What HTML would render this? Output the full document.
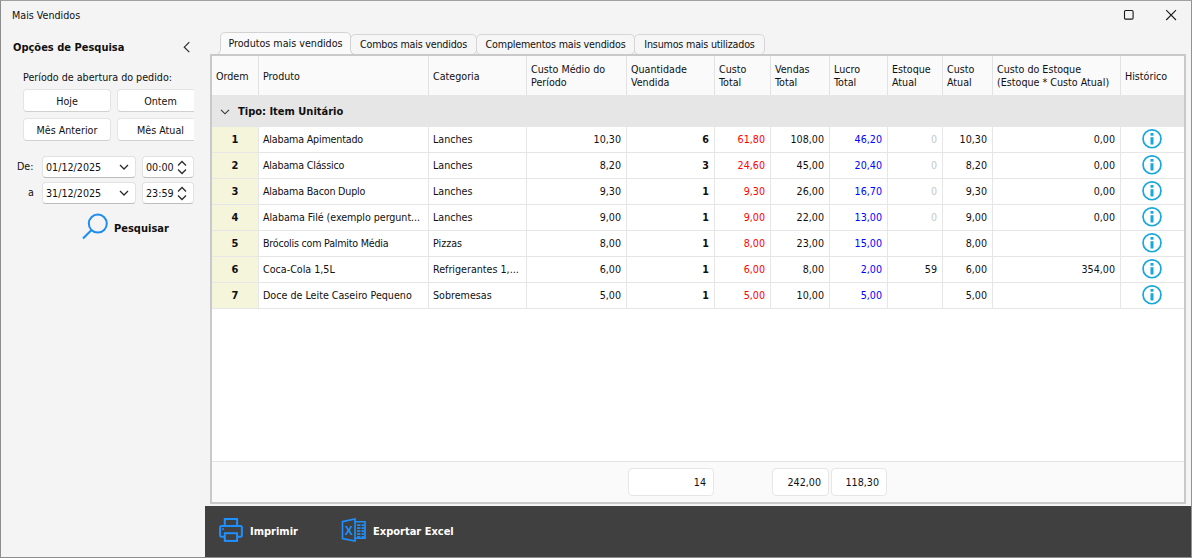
<!DOCTYPE html>
<html lang="pt-BR">
<head>
<meta charset="utf-8">
<title>Mais Vendidos</title>
<style>
*{box-sizing:border-box;margin:0;padding:0}
html,body{width:1192px;height:558px;overflow:hidden}
body{background:#f4f4f4;font-family:"DejaVu Sans Condensed","Liberation Sans",sans-serif;font-size:10.65px;color:#101010;position:relative}
.abs{position:absolute}
.t{position:absolute;white-space:nowrap;line-height:14px;height:14px}
.b{font-weight:bold}
#win{position:absolute;left:0;top:0;width:1192px;height:558px;border-left:1px solid #8c8c8c;border-top:1px solid #a0a0a0;border-right:1px solid #929292;border-bottom:1px solid #8c8c8c;pointer-events:none;z-index:50}
/* left panel */
.btn{position:absolute;height:23px;width:88px;padding-top:1px;background:#fff;border:1px solid #e4e4e4;border-bottom-color:#d0d0d0;border-radius:4px;text-align:center;line-height:21px;white-space:nowrap}
.inp{position:absolute;height:22px;padding-top:1px;background:#fff;border:1px solid #e2e2e2;border-bottom-color:#bdbdbd;border-radius:4px;line-height:19px;white-space:nowrap;padding-left:3px}
#leftclip{position:absolute;left:0;top:30px;width:194px;height:470px;overflow:hidden}
/* tabs */
.tab{position:absolute;top:34px;height:21px;background:#f6f6f6;border:1px solid #d6d6d6;border-radius:5px;text-align:center;line-height:19px;white-space:nowrap;z-index:1}
#acttab{position:absolute;left:217px;top:32px;width:137px;height:23px;z-index:2}
#acttab .t{left:0;width:137px;text-align:center;top:5px}
/* grid */
#grid{z-index:3;position:absolute;left:210px;top:54px;width:976px;height:450px;border:2px solid #c9c9c9;background:#fff;overflow:hidden}
#hdr{position:absolute;left:0;top:0;width:972px;height:39px;background:#fafafa}
.hc{position:absolute;top:0;height:39px;border-right:1px solid #e2e2e2;padding-left:4px;padding-top:2px;line-height:13px;display:flex;align-items:center;white-space:nowrap}
#grp{position:absolute;left:0;top:39px;width:972px;height:32px;background:#e6e6e6}
.row{position:absolute;left:0;width:972px;height:26px;border-bottom:1px solid #e6e6e6}
.c{position:absolute;top:0;height:25px;line-height:25px;border-right:1px solid #e6e6e6;white-space:nowrap;overflow:hidden}
.r{text-align:right;padding-right:5px}
.l{padding-left:4px}
.ord{background:#f5f5dc;text-align:center;font-weight:bold;font-size:11px}
.red{color:#f00}.blue{color:#00f}.gray{color:#c8c8c8}
#foot{position:absolute;left:0;top:405px;width:972px;height:41px;background:#fafafa;border-top:1px solid #e4e4e4}
.sum{position:absolute;top:6px;height:28px;background:#fff;border:1px solid #e6e6e6;border-radius:4px;text-align:right;padding-right:7px;line-height:27px}
#bar{position:absolute;left:205px;top:506px;width:986px;height:51px;background:#404040}
#bar .t{color:#fff;font-weight:bold;font-size:11px}
</style>
</head>
<body>
<div id="win"></div>
<div class="t" style="left:12px;top:9px">Mais Vendidos</div>
<svg class="abs" style="left:1122px;top:8px" width="14" height="14" viewBox="0 0 14 14"><rect x="2.5" y="2.5" width="8.6" height="8.6" rx="1.2" fill="none" stroke="#1a1a1a" stroke-width="1.1"/></svg>
<svg class="abs" style="left:1164px;top:8px" width="14" height="14" viewBox="0 0 14 14"><path d="M2.2 2.2 L12 12 M12 2.2 L2.2 12" fill="none" stroke="#1a1a1a" stroke-width="1.1"/></svg>

<div id="leftclip">
 <div class="t b" style="left:13px;top:11px;font-size:11px">Opções de Pesquisa</div>
 <svg class="abs" style="left:181px;top:10px" width="12" height="14" viewBox="0 0 12 14"><path d="M8.3 2.2 L3.3 7.2 L8.3 12.2" fill="none" stroke="#2a2a2a" stroke-width="1.2"/></svg>
 <div class="t" style="left:23px;top:41px">Período de abertura do pedido:</div>
 <div class="btn" style="left:23px;top:59px">Hoje</div>
 <div class="btn" style="left:117px;top:59px;width:87px">Ontem</div>
 <div class="btn" style="left:23px;top:88px">Mês Anterior</div>
 <div class="btn" style="left:117px;top:88px;width:87px">Mês Atual</div>
 <div class="t" style="left:17px;top:130px">De:</div>
 <div class="inp" style="left:42px;top:126px;width:94px">01/12/2025</div>
 <div class="inp" style="left:142px;top:126px;width:52px">00:00</div>
 <div class="t" style="left:28px;top:156px">a</div>
 <div class="inp" style="left:42px;top:152px;width:94px">31/12/2025</div>
 <div class="inp" style="left:142px;top:152px;width:52px">23:59</div>
 <svg class="abs" style="left:118px;top:132px" width="12" height="10" viewBox="0 0 12 10"><path d="M2 3 L6 7 L10 3" fill="none" stroke="#2a2a2a" stroke-width="1.25"/></svg>
 <svg class="abs" style="left:118px;top:158px" width="12" height="10" viewBox="0 0 12 10"><path d="M2 3 L6 7 L10 3" fill="none" stroke="#2a2a2a" stroke-width="1.25"/></svg>
 <svg class="abs" style="left:177px;top:130px" width="10" height="15" viewBox="0 0 10 15"><path d="M1 5.5 L5 1.5 L9 5.5 M1 9.5 L5 13.5 L9 9.5" fill="none" stroke="#2a2a2a" stroke-width="1.25"/></svg>
 <svg class="abs" style="left:177px;top:156px" width="10" height="15" viewBox="0 0 10 15"><path d="M1 5.5 L5 1.5 L9 5.5 M1 9.5 L5 13.5 L9 9.5" fill="none" stroke="#2a2a2a" stroke-width="1.25"/></svg>
 <svg class="abs" style="left:81px;top:183px" width="28" height="28" viewBox="0 0 28 28"><circle cx="16.8" cy="10.6" r="9" fill="none" stroke="#1e8cf0" stroke-width="2"/><path d="M10.3 17.2 L2 25.5" stroke="#1e8cf0" stroke-width="2.1" fill="none"/></svg>
 <div class="t b" style="left:114px;top:192px;font-size:11px">Pesquisar</div>
</div>

<div id="acttab"><svg class="abs" style="left:0;top:0" width="137" height="23" viewBox="0 0 137 23"><path d="M0 22.5 Q2.6 22 3.5 18.5 L3.5 5.5 Q3.5 0.5 8.5 0.5 L128.5 0.5 Q133.5 0.5 133.5 5.5 L133.5 18.5 Q134.4 22 137 22.5 Z" fill="#fafafa" stroke="#d2d2d2" stroke-width="1"/></svg><div class="t">Produtos mais vendidos</div></div>
<div class="tab" style="left:350px;width:127px;letter-spacing:-0.2px">Combos mais vendidos</div>
<div class="tab" style="left:476px;width:159px;letter-spacing:-0.18px">Complementos mais vendidos</div>
<div class="tab" style="left:634px;width:131px;letter-spacing:-0.19px">Insumos mais utilizados</div>

<div id="grid">
 <div id="hdr">
<div class="hc" style="left:0px;width:47px"><span>Ordem</span></div>
<div class="hc" style="left:47px;width:170px"><span>Produto</span></div>
<div class="hc" style="left:217px;width:98px"><span>Categoria</span></div>
<div class="hc" style="left:315px;width:100px;padding-top:0"><span>Custo Médio do<br>Período</span></div>
<div class="hc" style="left:415px;width:88px;padding-top:0"><span>Quantidade<br>Vendida</span></div>
<div class="hc" style="left:503px;width:56px;padding-top:0"><span>Custo<br>Total</span></div>
<div class="hc" style="left:559px;width:59px;padding-top:0"><span>Vendas<br>Total</span></div>
<div class="hc" style="left:618px;width:58px;padding-top:0"><span>Lucro<br>Total</span></div>
<div class="hc" style="left:676px;width:55px;padding-top:0"><span>Estoque<br>Atual</span></div>
<div class="hc" style="left:731px;width:50px;padding-top:0"><span>Custo<br>Atual</span></div>
<div class="hc" style="left:781px;width:128px;padding-top:0"><span>Custo do Estoque<br>(Estoque * Custo Atual)</span></div>
<div class="hc" style="left:909px;width:63px;border-right:none"><span>Histórico</span></div>
</div>
 <div id="grp"><svg class="abs" style="left:8px;top:13px" width="10" height="8" viewBox="0 0 10 8"><path d="M1 1.8 L5 5.8 L9 1.8" fill="none" stroke="#333" stroke-width="1.1"/></svg><div class="t b" style="left:26px;top:10px;font-size:11px">Tipo: Item Unitário</div></div>
 <div id="rows">
<div class="row" style="top:71px"><div class="c ord" style="left:0px;width:47px">1</div><div class="c l" style="left:47px;width:170px;letter-spacing:-0.19px">Alabama Apimentado</div><div class="c l" style="left:217px;width:98px">Lanches</div><div class="c r" style="left:315px;width:100px">10,30</div><div class="c r b" style="left:415px;width:88px">6</div><div class="c r red" style="left:503px;width:56px">61,80</div><div class="c r" style="left:559px;width:59px">108,00</div><div class="c r blue" style="left:618px;width:58px">46,20</div><div class="c r gray" style="left:676px;width:55px">0</div><div class="c r" style="left:731px;width:50px">10,30</div><div class="c r" style="left:781px;width:128px">0,00</div><div class="c" style="left:909px;width:63px;border-right:none"><svg class="abs" style="left:20px;top:1px" width="23" height="23" viewBox="0 0 23 23"><circle cx="11" cy="10.8" r="8.95" fill="none" stroke="#1aa7dc" stroke-width="1.7"/><rect x="9.5" y="9.2" width="3" height="7.3" fill="#1aa7dc"/><rect x="9.5" y="5" width="3" height="2.7" fill="#1aa7dc"/></svg></div></div>
<div class="row" style="top:97px"><div class="c ord" style="left:0px;width:47px">2</div><div class="c l" style="left:47px;width:170px;letter-spacing:-0.19px">Alabama Clássico</div><div class="c l" style="left:217px;width:98px">Lanches</div><div class="c r" style="left:315px;width:100px">8,20</div><div class="c r b" style="left:415px;width:88px">3</div><div class="c r red" style="left:503px;width:56px">24,60</div><div class="c r" style="left:559px;width:59px">45,00</div><div class="c r blue" style="left:618px;width:58px">20,40</div><div class="c r gray" style="left:676px;width:55px">0</div><div class="c r" style="left:731px;width:50px">8,20</div><div class="c r" style="left:781px;width:128px">0,00</div><div class="c" style="left:909px;width:63px;border-right:none"><svg class="abs" style="left:20px;top:1px" width="23" height="23" viewBox="0 0 23 23"><circle cx="11" cy="10.8" r="8.95" fill="none" stroke="#1aa7dc" stroke-width="1.7"/><rect x="9.5" y="9.2" width="3" height="7.3" fill="#1aa7dc"/><rect x="9.5" y="5" width="3" height="2.7" fill="#1aa7dc"/></svg></div></div>
<div class="row" style="top:123px"><div class="c ord" style="left:0px;width:47px">3</div><div class="c l" style="left:47px;width:170px;letter-spacing:-0.2px">Alabama Bacon Duplo</div><div class="c l" style="left:217px;width:98px">Lanches</div><div class="c r" style="left:315px;width:100px">9,30</div><div class="c r b" style="left:415px;width:88px">1</div><div class="c r red" style="left:503px;width:56px">9,30</div><div class="c r" style="left:559px;width:59px">26,00</div><div class="c r blue" style="left:618px;width:58px">16,70</div><div class="c r gray" style="left:676px;width:55px">0</div><div class="c r" style="left:731px;width:50px">9,30</div><div class="c r" style="left:781px;width:128px">0,00</div><div class="c" style="left:909px;width:63px;border-right:none"><svg class="abs" style="left:20px;top:1px" width="23" height="23" viewBox="0 0 23 23"><circle cx="11" cy="10.8" r="8.95" fill="none" stroke="#1aa7dc" stroke-width="1.7"/><rect x="9.5" y="9.2" width="3" height="7.3" fill="#1aa7dc"/><rect x="9.5" y="5" width="3" height="2.7" fill="#1aa7dc"/></svg></div></div>
<div class="row" style="top:149px"><div class="c ord" style="left:0px;width:47px">4</div><div class="c l" style="left:47px;width:170px;letter-spacing:-0.05px">Alabama Filé (exemplo pergunt...</div><div class="c l" style="left:217px;width:98px">Lanches</div><div class="c r" style="left:315px;width:100px">9,00</div><div class="c r b" style="left:415px;width:88px">1</div><div class="c r red" style="left:503px;width:56px">9,00</div><div class="c r" style="left:559px;width:59px">22,00</div><div class="c r blue" style="left:618px;width:58px">13,00</div><div class="c r gray" style="left:676px;width:55px">0</div><div class="c r" style="left:731px;width:50px">9,00</div><div class="c r" style="left:781px;width:128px">0,00</div><div class="c" style="left:909px;width:63px;border-right:none"><svg class="abs" style="left:20px;top:1px" width="23" height="23" viewBox="0 0 23 23"><circle cx="11" cy="10.8" r="8.95" fill="none" stroke="#1aa7dc" stroke-width="1.7"/><rect x="9.5" y="9.2" width="3" height="7.3" fill="#1aa7dc"/><rect x="9.5" y="5" width="3" height="2.7" fill="#1aa7dc"/></svg></div></div>
<div class="row" style="top:175px"><div class="c ord" style="left:0px;width:47px">5</div><div class="c l" style="left:47px;width:170px;letter-spacing:-0.23px">Brócolis com Palmito Média</div><div class="c l" style="left:217px;width:98px">Pizzas</div><div class="c r" style="left:315px;width:100px">8,00</div><div class="c r b" style="left:415px;width:88px">1</div><div class="c r red" style="left:503px;width:56px">8,00</div><div class="c r" style="left:559px;width:59px">23,00</div><div class="c r blue" style="left:618px;width:58px">15,00</div><div class="c r" style="left:676px;width:55px"></div><div class="c r" style="left:731px;width:50px">8,00</div><div class="c r" style="left:781px;width:128px"></div><div class="c" style="left:909px;width:63px;border-right:none"><svg class="abs" style="left:20px;top:1px" width="23" height="23" viewBox="0 0 23 23"><circle cx="11" cy="10.8" r="8.95" fill="none" stroke="#1aa7dc" stroke-width="1.7"/><rect x="9.5" y="9.2" width="3" height="7.3" fill="#1aa7dc"/><rect x="9.5" y="5" width="3" height="2.7" fill="#1aa7dc"/></svg></div></div>
<div class="row" style="top:201px"><div class="c ord" style="left:0px;width:47px">6</div><div class="c l" style="left:47px;width:170px">Coca-Cola 1,5L</div><div class="c l" style="left:217px;width:98px">Refrigerantes 1,...</div><div class="c r" style="left:315px;width:100px">6,00</div><div class="c r b" style="left:415px;width:88px">1</div><div class="c r red" style="left:503px;width:56px">6,00</div><div class="c r" style="left:559px;width:59px">8,00</div><div class="c r blue" style="left:618px;width:58px">2,00</div><div class="c r" style="left:676px;width:55px">59</div><div class="c r" style="left:731px;width:50px">6,00</div><div class="c r" style="left:781px;width:128px">354,00</div><div class="c" style="left:909px;width:63px;border-right:none"><svg class="abs" style="left:20px;top:1px" width="23" height="23" viewBox="0 0 23 23"><circle cx="11" cy="10.8" r="8.95" fill="none" stroke="#1aa7dc" stroke-width="1.7"/><rect x="9.5" y="9.2" width="3" height="7.3" fill="#1aa7dc"/><rect x="9.5" y="5" width="3" height="2.7" fill="#1aa7dc"/></svg></div></div>
<div class="row" style="top:227px"><div class="c ord" style="left:0px;width:47px">7</div><div class="c l" style="left:47px;width:170px">Doce de Leite Caseiro Pequeno</div><div class="c l" style="left:217px;width:98px">Sobremesas</div><div class="c r" style="left:315px;width:100px">5,00</div><div class="c r b" style="left:415px;width:88px">1</div><div class="c r red" style="left:503px;width:56px">5,00</div><div class="c r" style="left:559px;width:59px">10,00</div><div class="c r blue" style="left:618px;width:58px">5,00</div><div class="c r" style="left:676px;width:55px"></div><div class="c r" style="left:731px;width:50px">5,00</div><div class="c r" style="left:781px;width:128px"></div><div class="c" style="left:909px;width:63px;border-right:none"><svg class="abs" style="left:20px;top:1px" width="23" height="23" viewBox="0 0 23 23"><circle cx="11" cy="10.8" r="8.95" fill="none" stroke="#1aa7dc" stroke-width="1.7"/><rect x="9.5" y="9.2" width="3" height="7.3" fill="#1aa7dc"/><rect x="9.5" y="5" width="3" height="2.7" fill="#1aa7dc"/></svg></div></div>
</div>
 <div id="foot">
  <div class="sum" style="left:416px;width:86px">14</div>
  <div class="sum" style="left:560px;width:57px">242,00</div>
  <div class="sum" style="left:619px;width:56px">118,30</div>
 </div>
</div>

<div id="bar">
 <svg class="abs" style="left:13px;top:11px" width="27" height="26" viewBox="0 0 27 26"><g fill="none" stroke="#1e90ff" stroke-width="2" stroke-linejoin="miter"><path d="M6.8 9.1 V2 H19.1 V9.1"/><path d="M6.8 19.7 H3.6 Q2.1 19.7 2.1 18.2 V10.6 Q2.1 9.1 3.6 9.1 H22.4 Q23.9 9.1 23.9 10.6 V18.2 Q23.9 19.7 22.4 19.7 H19.1"/><rect x="6.8" y="16.2" width="12.3" height="7.7"/></g><rect x="4.2" y="11.2" width="1.7" height="1.8" fill="#1e90ff"/></svg>
 <div class="t" style="left:45px;top:19px">Imprimir</div>
 <svg class="abs" style="left:135px;top:10px" width="28" height="28" viewBox="0 0 28 28"><g fill="none" stroke="#1e90ff" stroke-width="1.6"><path d="M2.5 5.6 L15 2.9 L15 25.1 L2.5 22.6 Z"/><path d="M15 5.7 H25 V22.3 H15"/></g><g fill="#1e90ff"><rect x="17" y="8.3" width="3.4" height="1.7"/><rect x="21.5" y="8.3" width="3" height="1.7"/><rect x="17" y="11.25" width="3.4" height="1.7"/><rect x="21.5" y="11.25" width="3" height="1.7"/><rect x="17" y="14.2" width="3.4" height="1.7"/><rect x="21.5" y="14.2" width="3" height="1.7"/><rect x="17" y="17.15" width="3.4" height="1.7"/><rect x="21.5" y="17.15" width="3" height="1.7"/><rect x="17" y="20.1" width="3.4" height="1.7"/><rect x="21.5" y="20.1" width="3" height="1.7"/></g><text x="8.8" y="18.6" text-anchor="middle" font-family="'Liberation Sans',sans-serif" font-weight="bold" font-size="12" fill="#1e90ff">X</text></svg>
 <div class="t" style="left:168px;top:19px">Exportar Excel</div>
</div>
</body>
</html>
